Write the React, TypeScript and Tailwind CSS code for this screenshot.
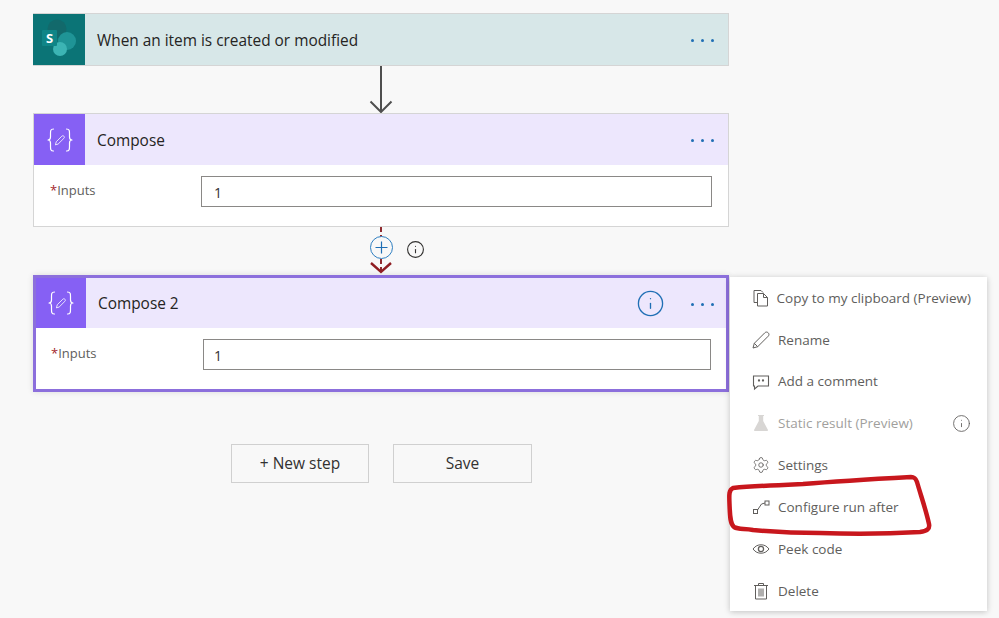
import { Settings, Info } from "lucide-react";
import type { ReactNode } from "react";

const FONT = "font-['Open_Sans','Noto_Sans',sans-serif]";

function SharePointIcon() {
  return (
    <svg width="52" height="51" viewBox="0 0 52 51">
      <circle cx="24" cy="15" r="9.5" fill="#12696b" />
      <circle cx="34" cy="27" r="9" fill="#1f9496" />
      <circle cx="27" cy="35" r="7" fill="#3cb4b4" />
      <rect x="9" y="16" width="15" height="16" rx="1" fill="#0f8587" />
      <text x="16.5" y="29" textAnchor="middle" fontSize="13" fontWeight="700" fill="#ffffff" fontFamily="Open Sans, sans-serif">
        S
      </text>
    </svg>
  );
}

function ComposeIcon() {
  return (
    <svg width="26" height="24" viewBox="0 0 26 24" fill="none" stroke="#ffffff" strokeWidth="1.2" strokeLinecap="round" strokeLinejoin="round">
      <path d="M6.5 1 C3.5 1 3.5 3 3.5 5.5 V9 C3.5 10.8 2.5 12 1 12 C2.5 12 3.5 13.2 3.5 15 V18.5 C3.5 21 3.5 23 6.5 23" />
      <path d="M19.5 1 C22.5 1 22.5 3 22.5 5.5 V9 C22.5 10.8 23.5 12 25 12 C23.5 12 22.5 13.2 22.5 15 V18.5 C22.5 21 22.5 23 19.5 23" />
      <path d="M8.5 16.5 L9.3 13.7 L14.8 8.2 C15.4 7.6 16.3 7.6 16.9 8.2 C17.5 8.8 17.5 9.7 16.9 10.3 L11.4 15.8 Z" strokeWidth="1" opacity="0.8" />
    </svg>
  );
}

function Dots() {
  return (
    <div className="flex gap-[7px]">
      <span className="w-[3px] h-[3px] rounded-full bg-[#1f6fb5]" />
      <span className="w-[3px] h-[3px] rounded-full bg-[#1f6fb5]" />
      <span className="w-[3px] h-[3px] rounded-full bg-[#1f6fb5]" />
    </div>
  );
}

function InputsRow({ pad, labelW, textPad }: { pad: string; labelW: string; textPad: string }) {
  return (
    <div className={`flex items-start ${pad}`}>
      <div className={`${labelW} pt-[5px] text-[13px] leading-[18px] text-[#605e5c]`}>
        <span className="text-[#a4262c]">*</span>Inputs
      </div>
      <div className={`flex-1 h-[31px] border border-[#8a8886] bg-white ${textPad} text-[14px] leading-[31px] text-[#323130]`}>1</div>
    </div>
  );
}

function CopyIcon() {
  return (
    <svg width="18" height="18" viewBox="0 0 18 18" fill="none" stroke="#605e5c" strokeWidth="1">
      <path d="M5 13.5 H2 V1.5 H9 L11 3.5" />
      <path d="M5.5 4.5 H11.5 L15.5 8.5 V17 H5.5 Z" />
      <path d="M11.5 4.5 V8.5 H15.5" />
    </svg>
  );
}

function PencilIcon() {
  return (
    <svg width="18" height="18" viewBox="0 0 18 18" fill="none" stroke="#605e5c" strokeWidth="1">
      <path d="M1 17 L2.3 12.3 L12.8 1.8 C13.8 0.8 15.2 0.8 16.2 1.8 C17.2 2.8 17.2 4.2 16.2 5.2 L5.7 15.7 Z" />
      <path d="M2.3 12.3 L5.7 15.7" />
    </svg>
  );
}

function CommentIcon() {
  return (
    <svg width="18" height="18" viewBox="0 0 18 18" fill="none" stroke="#605e5c" strokeWidth="1.1">
      <path d="M1.5 3 H16.5 V13 H6 L2.5 16 V13 H1.5 Z" />
      <circle cx="7" cy="7.5" r="0.6" fill="#605e5c" />
      <circle cx="11" cy="7.5" r="0.6" fill="#605e5c" />
    </svg>
  );
}

function FlaskIcon() {
  return (
    <svg width="18" height="18" viewBox="0 0 18 18">
      <path d="M6 1 H12 V2 H11.2 V7 L16 16 Q16.3 17 15 17 H3 Q1.7 17 2 16 L6.8 7 V2 H6 Z" fill="#d8d6d4" />
    </svg>
  );
}

function ConfigureRunAfterIcon() {
  return (
    <svg width="18" height="18" viewBox="0 0 18 18" fill="none" stroke="#605e5c" strokeWidth="1">
      <rect x="1.5" y="11.5" width="4" height="4" />
      <rect x="13" y="3" width="4" height="4" />
      <path d="M5.5 12 L9.5 6 L13 5" />
    </svg>
  );
}

function EyeIcon() {
  return (
    <svg width="18" height="18" viewBox="0 0 18 18" fill="none" stroke="#605e5c" strokeWidth="1">
      <path d="M1 9 C3.5 5.8 6 4.8 9 4.8 C12 4.8 14.5 5.8 17 9 C14.5 12.2 12 13.2 9 13.2 C6 13.2 3.5 12.2 1 9 Z" />
      <circle cx="9" cy="9" r="2.6" strokeWidth="1.3" />
    </svg>
  );
}

function TrashIcon() {
  return (
    <svg width="18" height="18" viewBox="0 0 18 18" fill="none" stroke="#605e5c" strokeWidth="1">
      <path d="M2 3.5 H16 M6.5 3.5 V1.5 H11.5 V3.5" />
      <path d="M3.5 3.5 V17 H14.5 V3.5" />
      <path d="M7 6.5 V14.5 M9 6.5 V14.5 M11 6.5 V14.5" />
    </svg>
  );
}

function MenuItem({ icon, label, muted, trailing }: { icon: ReactNode; label: string; muted?: boolean; trailing?: ReactNode }) {
  return (
    <div className="h-[41.85px] flex items-center pl-[22px] pr-[16px]">
      <div className="w-[26px] flex items-center">{icon}</div>
      <span className={`flex-1 text-[13.5px] whitespace-nowrap ${muted ? "text-[#a19f9d]" : "text-[#605e5c]"}`}>{label}</span>
      {trailing}
    </div>
  );
}

export default function App() {
  return (
    <div className={`relative w-[999px] h-[618px] overflow-hidden bg-[#f8f8f8] ${FONT}`}>
      <div className="w-[729px] pl-[33px] pt-[13px]">
        {/* trigger */}
        <div className="h-[53px] flex border border-[#d5d5d5] border-l-0 bg-[#d7e7e8]">
          <div className="w-[52px] bg-[#0b7476]">
            <SharePointIcon />
          </div>
          <div className="flex-1 pl-[12px] text-[15.4px] leading-[53px] text-[#252423]">When an item is created or modified</div>
          <div className="w-[52px] flex items-center pl-[15px] pt-[2px]"><Dots /></div>
        </div>

        <div className="h-[47px] flex justify-center">
          <svg width="26" height="47" viewBox="0 0 26 47" fill="none" stroke="#4f4f4f" strokeWidth="2">
            <path d="M13 0 V46 M2.5 35.5 L13 46 L23.5 35.5" />
          </svg>
        </div>

        {/* compose */}
        <div className="h-[114px] border border-[#d5d5d5] bg-white">
          <div className="h-[51px] flex bg-[#ede7fd]">
            <div className="w-[51px] bg-[#8660f4] flex items-center justify-center">
              <ComposeIcon />
            </div>
            <div className="flex-1 pl-[12px] text-[15.4px] leading-[54px] text-[#252423]">Compose</div>
            <div className="w-[52px] flex items-center pl-[15px] pt-[2px]"><Dots /></div>
          </div>
          <InputsRow pad="pl-[16px] pr-[16px] pt-[11px]" labelW="w-[151px]" textPad="pl-[12px]" />
        </div>

        {/* branch between steps */}
        <div className="relative h-[48px]">
          <svg className="absolute left-[336px] top-0" width="24" height="48" viewBox="0 0 24 48" fill="none">
            <path d="M12 0 V46" stroke="#8f2a2f" strokeWidth="2" strokeDasharray="5 3" />
            <path d="M2 36 L12 45 L22 36" stroke="#8f1d22" strokeWidth="2.4" />
          </svg>
          <div className="absolute left-[337px] top-[9px] w-[23px] h-[23px] rounded-full border border-[#2f7fc1] bg-[#f8f8f8] flex items-center justify-center">
            <svg width="13" height="13" viewBox="0 0 13 13" stroke="#1f6fb5" strokeWidth="1.2">
              <path d="M6.5 0.5 V12.5 M0.5 6.5 H12.5" />
            </svg>
          </div>
          <Info size={19} strokeWidth={1.4} className="absolute left-[373px] top-[13px] text-[#323130]" />
        </div>

        {/* compose 2, selected */}
        <div className="h-[117px] border-[3px] border-[#8c6fdc] bg-white shadow-[0_0_6px_rgba(0,0,0,0.12)]">
          <div className="h-[50px] flex items-stretch bg-[#ede7fd]">
            <div className="w-[50px] bg-[#8660f4] flex items-center justify-center">
              <ComposeIcon />
            </div>
            <div className="flex-1 pl-[12px] text-[15.4px] leading-[52px] text-[#252423]">Compose 2</div>
            <div className="w-[53px] flex items-center">
              <Info size={29} strokeWidth={1.1} className="text-[#1f6fb5]" />
            </div>
            <div className="w-[37px] flex items-center pl-[2px] pt-[2px]"><Dots /></div>
          </div>
          <InputsRow pad="pl-[15px] pr-[15px] pt-[11px]" labelW="w-[152px]" textPad="pl-[10px]" />
        </div>

        <div className="flex gap-[24px] pl-[198px] pt-[52px]">
          <div className="w-[138px] h-[39px] border border-[#d0d0d0] text-center text-[15.5px] leading-[37px] text-[#323130]">+ New step</div>
          <div className="w-[139px] h-[39px] border border-[#d0d0d0] text-center text-[15.5px] leading-[37px] text-[#323130]">Save</div>
        </div>
      </div>

      {/* context menu */}
      <div className="absolute left-[730px] top-[277px] w-[257px] h-[334px] bg-white shadow-[0_1px_6px_rgba(0,0,0,0.22)]">
        <MenuItem label="Copy to my clipboard (Preview)" icon={<CopyIcon />} />
        <MenuItem label="Rename" icon={<PencilIcon />} />
        <MenuItem label="Add a comment" icon={<CommentIcon />} />
        <MenuItem label="Static result (Preview)" muted icon={<FlaskIcon />} trailing={<Info size={19} strokeWidth={1.1} className="text-[#605e5c]" />} />
        <MenuItem label="Settings" icon={<Settings size={18} strokeWidth={1.1} className="text-[#605e5c]" />} />
        <MenuItem label="Configure run after" icon={<ConfigureRunAfterIcon />} />
        <MenuItem label="Peek code" icon={<EyeIcon />} />
        <MenuItem label="Delete" icon={<TrashIcon />} />
      </div>

      {/* hand drawn annotation */}
      <svg className="absolute left-[725px] top-[472px]" width="212" height="68" viewBox="0 0 212 68" fill="none">
        <path
          d="M8 16 C30 14 55 13 78 12 C115 9 150 7 186 5 C190 5 191 7 192 10 C196 24 201 38 204 52 C205 57 202 59 195 60 C160 62 125 62 95 61 C72 61 50 60 28 58 C20 56 14 58 9 55 C5 52 5 44 4.5 32 C4 22 4 18 8 16 Z"
          stroke="#c8171d"
          strokeWidth="4.5"
          strokeLinejoin="round"
        />
      </svg>
    </div>
  );
}
